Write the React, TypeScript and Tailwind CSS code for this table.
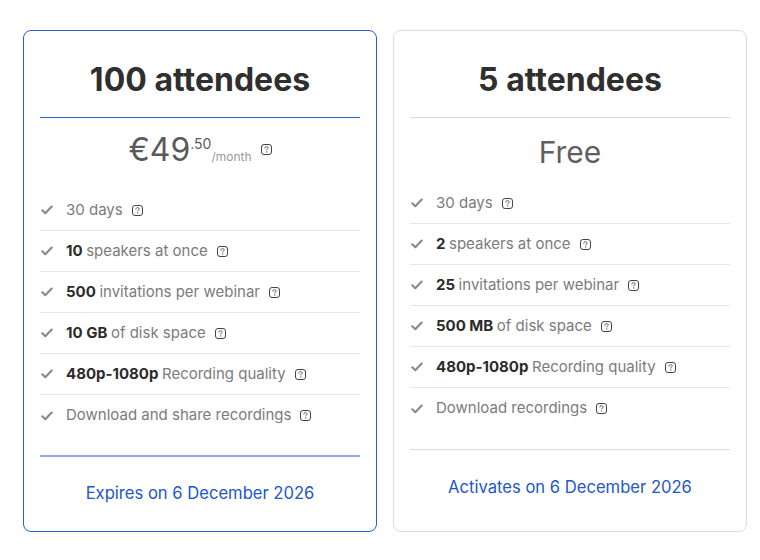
import type { ReactNode } from 'react';

type Feature = { bold?: string; text: string };

const paid: Feature[] = [
  { text: '30 days' },
  { bold: '10', text: 'speakers at once' },
  { bold: '500', text: 'invitations per webinar' },
  { bold: '10 GB', text: 'of disk space' },
  { bold: '480p-1080p', text: 'Recording quality' },
  { text: 'Download and share recordings' },
];

const free: Feature[] = [
  { text: '30 days' },
  { bold: '2', text: 'speakers at once' },
  { bold: '25', text: 'invitations per webinar' },
  { bold: '500 MB', text: 'of disk space' },
  { bold: '480p-1080p', text: 'Recording quality' },
  { text: 'Download recordings' },
];

function HelpIcon() {
  return (
    <svg width="11" height="11" viewBox="0 0 11 11" className="shrink-0">
      <rect x="0.5" y="0.5" width="10" height="10" rx="2.5" fill="none" stroke="#444" strokeWidth="1" />
      <path d="M3.9 4.1c0-1 .7-1.5 1.6-1.5s1.6.5 1.6 1.3c0 1-1.3 1.1-1.3 2.1" fill="none" stroke="#444" strokeWidth="0.9" strokeLinecap="round" />
      <circle cx="5.8" cy="7.9" r="0.6" fill="#444" />
    </svg>
  );
}

function Check() {
  return (
    <svg width="12" height="10" viewBox="0 0 12 10" className="shrink-0">
      <path d="M1.3 5.3 4.3 8.2 10.7 1.6" fill="none" stroke="#8a8a8a" strokeWidth="2.2" strokeLinecap="round" strokeLinejoin="round" />
    </svg>
  );
}

function FeatureList({ items }: { items: Feature[] }) {
  return (
    <ul>
      {items.map((f, i) => (
        <li
          key={i}
          className={`flex items-center h-[41px] pl-[1px] ${i < items.length - 1 ? 'border-b border-[#e6e6e6]' : ''}`}
        >
          <Check />
          <span className="ml-[13px] text-[15px] text-[#7b7b7b]">
            {f.bold && <b className="font-bold text-[#2b2b2b]">{f.bold} </b>}
            {f.text}
          </span>
          <span className="ml-[9px]">
            <HelpIcon />
          </span>
        </li>
      ))}
    </ul>
  );
}

function Card({
  title,
  price,
  features,
  footer,
  active,
}: {
  title: string;
  price: ReactNode;
  features: Feature[];
  footer: string;
  active?: boolean;
}) {
  return (
    <div
      className={`w-[354px] flex flex-col rounded-[8px] border px-4 bg-white ${
        active ? 'border-[#2b5fd0]' : 'border-[#dcdcdc]'
      }`}
    >
      <h2 className="pt-[31px] pb-[19px] text-center text-[32px] leading-[36px] font-bold text-[#2f2f2f]">
        {title}
      </h2>
      <div className={`h-px ${active ? 'bg-[#2b5fd0]' : 'bg-[#dcdcdc]'}`} />
      {price}
      <FeatureList items={features} />
      <div className={active ? 'mt-[19px] h-[2px] bg-[#8ea9e3]' : 'mt-5 h-px bg-[#dcdcdc]'} />
      <p className={`${active ? 'pt-[24px]' : 'pt-[25px]'} pb-[26px] text-center text-[16.6px] leading-[24px] text-[#2356c9]`}>
        {footer}
      </p>
    </div>
  );
}

export default function App() {
  return (
    <div className="min-h-[560px] bg-white font-['Inter',sans-serif]">
      <div className="flex items-stretch gap-4 pl-[23px] pt-[30px]">
        <Card
          active
          title="100 attendees"
          features={paid}
          footer="Expires on 6 December 2026"
          price={
            <div className="flex items-center justify-center pt-[14px] pb-[22px] h-[72px]">
              <span className="text-[32px] leading-[36px] text-[#5a5a5a]">€49</span>
              <span className="self-start mt-[1px] text-[14px] text-[#5a5a5a]">.50</span>
              <span className="self-end mb-[2px] text-[12px] text-[#9a9a9a]">/month</span>
              <span className="ml-[9px] mb-[2px]">
                <HelpIcon />
              </span>
            </div>
          }
        />
        <Card
          title="5 attendees"
          features={free}
          footer="Activates on 6 December 2026"
          price={
            <div className="pt-[16px] pb-[13px] text-center text-[30px] leading-[36px] text-[#5f5f5f]">Free</div>
          }
        />
      </div>
    </div>
  );
}
